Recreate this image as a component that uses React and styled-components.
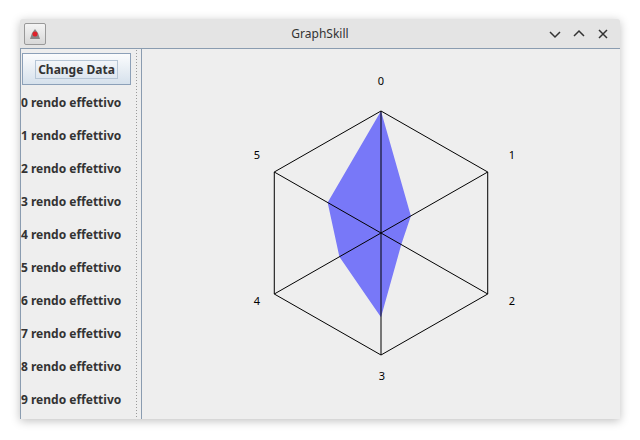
import styled, { createGlobalStyle } from 'styled-components';

const Global = createGlobalStyle`
  body { margin: 0; background: #fff; font-family: "Noto Sans", "DejaVu Sans", sans-serif; }
`

const Page = styled.div`
  width: 640px;
  height: 440px;
  display: flex;
  padding: 19px 0 0 20px;
  box-sizing: border-box;
`

const Window = styled.div`
  width: 600px;
  height: 400px;
  display: flex;
  flex-direction: column;
  background: #eeeeee;
  box-shadow: 0 2px 10px rgba(0,0,0,0.25);
  border-radius: 3px 3px 0 0;
  overflow: hidden;
`

const TitleBar = styled.div`
  height: 29px;
  display: flex;
  align-items: center;
  background: #e4e4e4;
  border-bottom: 1px solid #8a9cb0;
  font-size: 12px;
  color: #333;
`

const Title = styled.div`
  flex: 1;
  text-align: center;
  margin-left: 46px;
`

const Controls = styled.div`
  display: flex;
  gap: 10px;
  padding-right: 10px;
  svg { width: 14px; height: 14px; stroke: #333; stroke-width: 1.5; fill: none; }
`

const AppIcon = styled.div`
  width: 20px;
  height: 20px;
  margin-left: 4px;
  border: 1px solid #999;
  border-radius: 2px;
  background: linear-gradient(#f4f4f4, #d8d8d8);
  display: flex;
  align-items: center;
  justify-content: center;
`

const Body = styled.div`
  flex: 1;
  display: flex;
`

const Side = styled.div`
  width: 113px;
  display: flex;
  flex-direction: column;
  border-left: 1px solid #8a9cb0;
  box-sizing: border-box;
`

const Button = styled.button`
  margin: 4px 2px 1px 1px;
  height: 32px;
  border: 1px solid #8ca0b8;
  background: linear-gradient(#fbfcfd, #d6e1ec);
  font-family: inherit;
  font-weight: bold;
  font-size: 12px;
  color: #333;
  display: flex;
  align-items: center;
  justify-content: center;
  padding: 0;
  span { border: 1px solid #b6c6d6; padding: 0 2px; line-height: 17px; }
`

const Item = styled.div`
  height: 33px;
  line-height: 33px;
  font-size: 12px;
  font-weight: bold;
  color: #333;
  white-space: nowrap;
`

const Divider = styled.div`
  width: 8px;
  border-right: 1px solid #8a9cb0;
  background-image: radial-gradient(#999 0.6px, transparent 0.8px);
  background-size: 3px 3px;
  background-position: 2px 0;
  background-repeat: repeat-y;
`

const Chart = styled.div`
  flex: 1;
  svg { display: block; }
`

const cx = 239, cy = 184, R = 122;
const ang = i => (-90 + i * 60) * Math.PI / 180;
const pt = (i, r) => [cx + r * Math.cos(ang(i)) * 1.01, cy + r * Math.sin(ang(i))];
const vals = [1, 0.28, 0.19, 0.69, 0.39, 0.5];
const labels = [[0, -152], [131, -78], [131, 68], [1, 143], [-124, 68], [-124, -78]];

export default function App() {
  const hex = [0,1,2,3,4,5].map(i => pt(i, R));
  const poly = vals.map((v, i) => pt(i, R * v));
  return (
    <Page>
      <Global />
      <Window>
        <TitleBar>
          <AppIcon>
            <svg width="14" height="14" viewBox="0 0 14 14">
              <path d="M2 12 L4 6 L7 2 L10 6 L12 12 Z" fill="#888" />
              <circle cx="7" cy="7" r="2.5" fill="#e0202a" />
            </svg>
          </AppIcon>
          <Title>GraphSkill</Title>
          <Controls>
            <svg viewBox="0 0 14 14"><path d="M2 5 L7 10 L12 5" /></svg>
            <svg viewBox="0 0 14 14"><path d="M2 9 L7 4 L12 9" /></svg>
            <svg viewBox="0 0 14 14"><path d="M3 3 L11 11 M11 3 L3 11" /></svg>
          </Controls>
        </TitleBar>
        <Body>
          <Side>
            <Button><span>Change Data</span></Button>
            {[0,1,2,3,4,5,6,7,8,9].map(n => <Item key={n}>{n} rendo effettivo</Item>)}
          </Side>
          <Divider />
          <Chart>
            <svg width="478" height="370">
              <polygon points={poly.map(p => p.join(',')).join(' ')} fill="#7878f8" />
              <polygon points={hex.map(p => p.join(',')).join(' ')} fill="none" stroke="#000" strokeWidth="1" />
              {[0,1,2].map(i => (
                <line key={i} x1={hex[i][0]} y1={hex[i][1]} x2={hex[i+3][0]} y2={hex[i+3][1]} stroke="#000" />
              ))}
              {labels.map(([dx, dy], i) => (
                <text key={i} x={cx + dx} y={cy + dy + 4} fontSize="11" textAnchor="middle" fontFamily="Noto Sans, sans-serif" fill="#000">{i}</text>
              ))}
            </svg>
          </Chart>
        </Body>
      </Window>
    </Page>
  );
}
